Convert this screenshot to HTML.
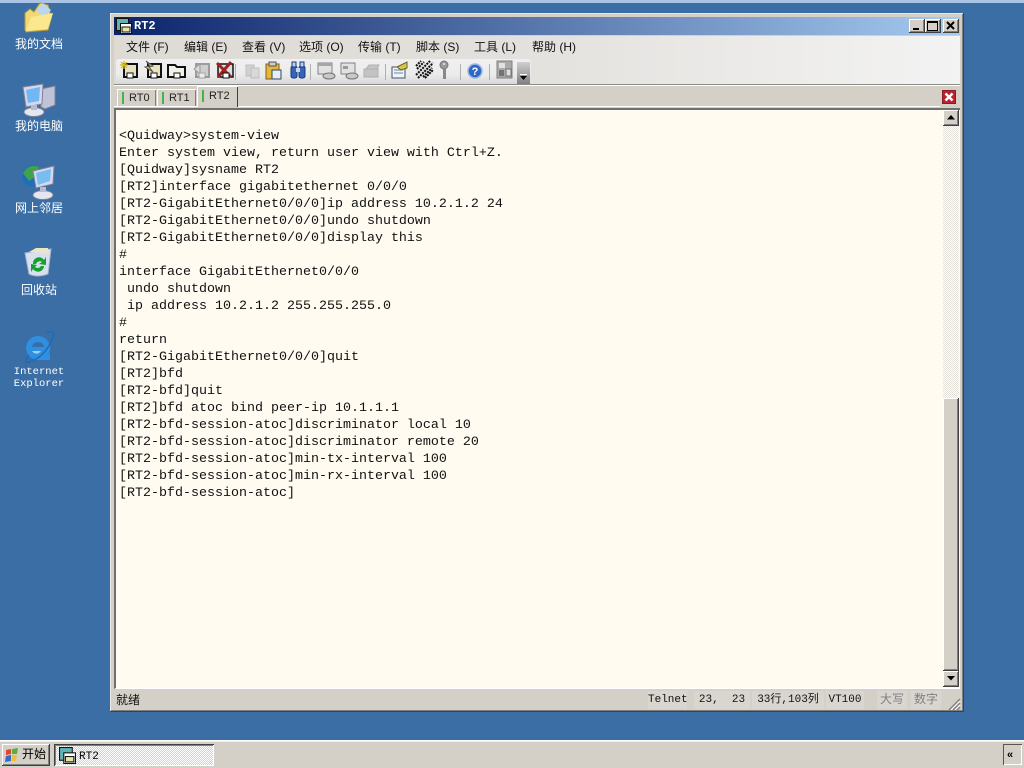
<!DOCTYPE html>
<html><head><meta charset="utf-8"><style>
html,body{margin:0;padding:0;width:1024px;height:768px;overflow:hidden;background:#3a6ea5}
*{box-sizing:border-box}
.a{position:absolute}
body{font-family:"Liberation Sans","Noto Sans CJK SC",sans-serif;font-size:12px;color:#000}
.t{position:absolute;white-space:pre;line-height:14px}
.dl{position:absolute;width:90px;left:-6px;text-align:center;color:#fff;font-size:12px;line-height:14px;font-family:"Liberation Sans","Noto Sans CJK SC",sans-serif}
.btn{position:absolute;background:#d4d0c8;box-shadow:inset -1px -1px 0 #404040,inset 1px 1px 0 #fff,inset -2px -2px 0 #808080}
#term{position:absolute;left:119px;top:128px;font:13.33px/17px "Liberation Mono","Noto Sans CJK SC",monospace;color:#111;white-space:pre;margin:0}
.m{position:absolute;top:40px;font-size:12px;line-height:14px;white-space:pre;color:#111;font-family:"Liberation Sans","Noto Sans CJK SC",sans-serif}
.sb{position:absolute;top:691px;height:18px;line-height:18px;font-size:11px;font-family:"Liberation Mono","Noto Sans CJK SC",monospace;background:#d9d6cf;white-space:pre;text-align:center;color:#111}
.tab{position:absolute;background:#d4d0c8;font-size:11px;color:#222;box-shadow:inset 1px 1px 0 #fff,inset -1px 0 0 #808080}
.g{position:absolute;width:2px;background:#3fb54a}
.sep{position:absolute;top:64px;width:1px;height:16px;background:#b0b0b0}
</style></head><body>
<div class="a" style="left:0;top:0;width:1024px;height:3px;background:#a9c4e4"></div>

<!-- desktop icons -->
<svg class="a" style="left:18px;top:0" width="40" height="34" viewBox="0 0 40 34"><path d="M7 13 L12 9 L16 12 L22 3 L30 5 L32 13 L34 15 L30 30 L8 32 L7 30Z" fill="#f2d774" stroke="#b89a3a"/><path d="M18 10 L25 3 L33 10 L26 18Z" fill="#bcd6ee"/><path d="M8 31 L13 17 L35 13 L30 29Z" fill="#fbe78e"/></svg>
<div class="dl" style="top:37px">我的文档</div>
<svg class="a" style="left:21px;top:83px" width="36" height="34" viewBox="0 0 36 34"><path d="M20 6 L34 3 L34 22 L24 26 L20 24Z" fill="#c0c3d8" stroke="#7f8298"/><path d="M2 4 L22 1 L21 21 L5 24Z" fill="#d5d8ec" stroke="#7f8298"/><path d="M5 7 L19 4 L18 18 L7 20Z" fill="#70b8f4"/><ellipse cx="13" cy="29" rx="10" ry="4.500" fill="#e6e6f0" stroke="#7f8298"/><rect x="10" y="22" width="6" height="5" fill="#b8bbd2"/></svg>
<div class="dl" style="top:119px">我的电脑</div>
<svg class="a" style="left:21px;top:164px" width="36" height="36" viewBox="0 0 36 36"><circle cx="12" cy="12" r="11" fill="#1f6fb8"/><path d="M2 9 Q8 -1 18 3 L16 11 L8 17Z" fill="#3fa34d"/><path d="M12 7 L33 2 L32 20 L15 24Z" fill="#d5d8ec" stroke="#7f8298"/><path d="M15 9 L30 5 L29 17 L17 21Z" fill="#78bcf4"/><ellipse cx="22" cy="31" rx="10" ry="4.500" fill="#e6e6f0" stroke="#7f8298"/><rect x="19" y="23" width="6" height="5" fill="#b8bbd2"/></svg>
<div class="dl" style="top:201px">网上邻居</div>
<svg class="a" style="left:22px;top:247px" width="34" height="32" viewBox="0 0 34 32"><path d="M3 6 L29 2 L26 27 Q15 31 7 27Z" fill="#d8e0ee" stroke="#a8b4cc"/><path d="M7 5 L14 1 L26 1 L27 6Z" fill="#ece6c8"/><path d="M11 17 A6 6 0 0 1 22 13 L24 10 L24 18 L17 17 L20 15 A4 4 0 0 0 14 17Z" fill="#14a02c"/><path d="M22 19 A6 6 0 0 1 11 22 L9 25 L9 17 L15 18 L13 20 A4 4 0 0 0 19 19Z" fill="#14a02c"/></svg>
<div class="dl" style="top:283px">回收站</div>
<svg class="a" style="left:22px;top:330px" width="34" height="34" viewBox="0 0 34 34"><ellipse cx="16" cy="18" rx="12" ry="12" fill="#2f8fe0"/><path d="M10 17 Q11 12 16 12 Q21 12 22 17Z" fill="#3a6ea5"/><rect x="9" y="17" width="19" height="4" fill="#2f8fe0"/><path d="M10 21 Q12 26 16 26 Q20 26 22 23 L28 23 L28 30 L14 30Z" fill="#2f8fe0"/><path d="M10 21 H19 Q16 25 12 23Z" fill="#9fd0f4"/><path d="M7 25 Q0 34 7 32 Q22 28 31 8 Q34 -1 24 3" fill="none" stroke="#1c6cbc" stroke-width="1.500"/></svg>
<div class="dl" style="top:366px;font:10.5px/12px 'Liberation Mono',monospace">Internet<br>Explorer</div>

<!-- window -->
<div class="a" style="left:110px;top:13px;width:854px;height:699px;background:#d4d0c8;box-shadow:inset -1px -1px 0 #404040,inset 1px 1px 0 #e8e8e8,inset -2px -2px 0 #808080"></div>
<div class="a" style="left:114px;top:17px;width:846px;height:18px;background:linear-gradient(90deg,#0a246a,#a6caf0)"></div>
<svg class="a" style="left:116px;top:18px" width="16" height="16" viewBox="0 0 16 16"><rect x=".5" y=".5" width="12" height="12" fill="#5fb3b3" stroke="#111"/><rect x="4.500" y="5.500" width="11" height="10" fill="#fff" stroke="#111"/><rect x="6" y="9" width="8" height="5" fill="#e8e6a0" stroke="#111"/></svg>
<div class="t" style="left:134px;top:19px;color:#fff;font:bold 12px/14px 'Liberation Mono',monospace">RT2</div>
<div class="btn" style="left:909px;top:19px;width:16px;height:14px"></div><div class="a" style="left:913px;top:28px;width:6px;height:2px;background:#000"></div>
<div class="btn" style="left:925px;top:19px;width:16px;height:14px"></div><div class="a" style="left:927px;top:21px;width:11px;height:10px;border:1px solid #000;border-top-width:2px"></div>
<div class="btn" style="left:943px;top:19px;width:16px;height:14px"></div>
<svg class="a" style="left:946px;top:21px" width="10" height="10"><path d="M1 1 L8 8 M8 1 L1 8" stroke="#000" stroke-width="2"/></svg>

<!-- menu + toolbar -->
<div class="a" style="left:114px;top:36px;width:846px;height:48px;background:linear-gradient(90deg,#dedbd5,#e2e0dc 45%,#f3f3f3)"></div>
<div class="a" style="left:116px;top:59px;width:415px;height:25px;background:linear-gradient(180deg,#f0f0f0,#ececec 60%,#d8d8d8);border-radius:3px"></div>
<div class="a" style="left:517px;top:62px;width:13px;height:22px;background:linear-gradient(180deg,#cfcfcf,#808080)"></div>
<div class="a" style="left:520px;top:74px;width:7px;height:1px;background:#fff"></div>
<svg class="a" style="left:520px;top:76px" width="7" height="4"><path d="M0 0H7L3.500 4Z" fill="#000"/></svg>
<div class="m" style="left:126px">文件 (F)</div><div class="m" style="left:184px">编辑 (E)</div><div class="m" style="left:242px">查看 (V)</div><div class="m" style="left:299px">选项 (O)</div><div class="m" style="left:358px">传输 (T)</div><div class="m" style="left:416px">脚本 (S)</div><div class="m" style="left:474px">工具 (L)</div><div class="m" style="left:532px">帮助 (H)</div>

<!-- toolbar icons -->
<svg class="a" style="left:119px;top:60px" width="420" height="22" viewBox="0 0 420 22" fill="none" stroke-width="1">
<g><path d="M5 4H18V17H5Z" fill="#e8e2c0" stroke="#111" stroke-width="2"/><path d="M1 5L9 5M5 1V9M2 2L8 8M8 2L2 8" stroke="#d0b820" stroke-width="1.200"/><rect x="8" y="13" width="6" height="5" fill="#fff" stroke="#111"/></g>
<g transform="translate(24)"><path d="M5 4H18V17H5Z" fill="#e8e2c0" stroke="#111" stroke-width="2"/><path d="M3 1L10 6L6 7L10 12L2 7L7 6Z" fill="#f0d820" stroke="#555"/><rect x="8" y="13" width="6" height="5" fill="#fff" stroke="#111"/></g>
<g transform="translate(48)"><path d="M1 5H8L10 7H18V17H1Z" fill="#f4f2e8" stroke="#111" stroke-width="2"/><rect x="7" y="13" width="6" height="5" fill="#fff" stroke="#111"/></g>
<g transform="translate(72)" opacity=".6"><path d="M5 4H18V17H5Z" fill="#bbb" stroke="#666" stroke-width="2"/><path d="M3 9L9 4V14Z" fill="#ccc" stroke="#666"/><rect x="8" y="13" width="6" height="5" fill="#eee" stroke="#777"/></g>
<g transform="translate(96)"><path d="M3 4H18V17H3Z" fill="#ddd" stroke="#111" stroke-width="1.500"/><path d="M2 3L16 17M16 2L3 17" stroke="#a02020" stroke-width="3"/><rect x="8" y="13" width="6" height="5" fill="#fff" stroke="#111"/></g>
<g transform="translate(126)" opacity=".55"><rect x="1" y="5" width="8" height="11" fill="#bbb" stroke="#999"/><rect x="6" y="8" width="8" height="10" fill="#ccc" stroke="#999"/></g>
<g transform="translate(146)"><rect x="1" y="4" width="13" height="15" fill="#e5b83a" stroke="#7a6020"/><rect x="4" y="2" width="7" height="4" fill="#ccc" stroke="#555"/><rect x="7" y="10" width="9" height="9" fill="#e8eef6" stroke="#345"/></g>
<g transform="translate(170)"><rect x="2" y="6" width="6" height="12" rx="2" fill="#3a64b8" stroke="#123a80"/><rect x="10" y="6" width="6" height="12" rx="2" fill="#3a64b8" stroke="#123a80"/><rect x="3" y="2" width="4" height="5" fill="#bcd0ee" stroke="#123a80"/><rect x="11" y="2" width="4" height="5" fill="#bcd0ee" stroke="#123a80"/><rect x="7" y="8" width="4" height="4" fill="#cad6ea"/></g>
<g transform="translate(198)" opacity=".7"><rect x="1" y="3" width="14" height="11" fill="#ddd" stroke="#555"/><rect x="1" y="3" width="14" height="3" fill="#888"/><ellipse cx="12" cy="16" rx="6" ry="3" fill="#bbb" stroke="#444"/></g>
<g transform="translate(221)" opacity=".7"><rect x="1" y="3" width="14" height="11" fill="#ddd" stroke="#555"/><rect x="3" y="6" width="5" height="3" fill="#777"/><ellipse cx="12" cy="16" rx="6" ry="3" fill="#bbb" stroke="#444"/></g>
<g transform="translate(244)" opacity=".6"><path d="M3 9H14L16 5H6ZM1 9H15V17H1Z" fill="#aaa" stroke="#888"/></g>
<g transform="translate(272)"><rect x="1" y="7" width="13" height="11" fill="#f0f4fa" stroke="#456"/><path d="M3 10H12M3 13H12" stroke="#68a"/><path d="M6 7L16 2V8L10 10Z" fill="#d8c84a" stroke="#6a6020"/></g>
<g transform="translate(296)"><rect x="1" y="1" width="17" height="17" fill="#e8e8e8"/><path d="M1 15L15 1M3 18L18 3M1 6L6 1M10 18L18 10M2 9L9 2M8 17L17 8" stroke="#111" stroke-width="2" stroke-dasharray="2 1"/></g>
<g transform="translate(320)"><circle cx="5" cy="5" r="4" fill="#999" stroke="#777"/><rect x="4" y="8" width="3" height="11" fill="#888"/><circle cx="5" cy="4" r="1" fill="#eee"/></g>
<g transform="translate(348)"><circle cx="8" cy="11" r="7" fill="#2d68c8" stroke="#9db8e0" stroke-width="1.500"/></g>
<text x="356" y="15" text-anchor="middle" font-family="Liberation Sans" font-weight="bold" font-size="11" fill="#fff">?</text>
<g transform="translate(377)" opacity=".8"><rect x="1" y="1" width="15" height="17" fill="#9a9a9a" stroke="#666"/><rect x="3" y="3" width="6" height="5" fill="#dedede"/><rect x="3" y="10" width="5" height="6" fill="#555"/><rect x="10" y="9" width="5" height="7" fill="#ddd" stroke="#555"/></g>
</svg>
<div class="sep" style="left:235px"></div><div class="sep" style="left:310px"></div><div class="sep" style="left:385px"></div><div class="sep" style="left:460px"></div><div class="sep" style="left:489px"></div>

<div class="a" style="left:114px;top:84px;width:846px;height:1px;background:#8a8a86"></div>
<div class="a" style="left:114px;top:85px;width:846px;height:1px;background:#fff"></div>

<!-- tabs -->
<div class="a" style="left:114px;top:106px;width:826px;height:1px;background:#fff"></div>
<div class="tab" style="left:117px;top:89px;width:39px;height:17px"></div><div class="g" style="left:122px;top:92px;height:12px"></div><div class="t" style="left:129px;top:91px;font-size:11px;color:#222">RT0</div>
<div class="tab" style="left:157px;top:89px;width:39px;height:17px"></div><div class="g" style="left:162px;top:92px;height:12px"></div><div class="t" style="left:169px;top:91px;font-size:11px;color:#222">RT1</div>
<div class="tab" style="left:197px;top:86px;width:41px;height:21px;box-shadow:inset 1px 1px 0 #fff,inset -1px 0 0 #404040"></div><div class="g" style="left:202px;top:90px;height:12px"></div><div class="t" style="left:209px;top:89px;font-size:11px;color:#222">RT2</div>
<div class="a" style="left:942px;top:90px;width:14px;height:14px;background:#b92231;border:1px solid #8a1a24"></div>
<svg class="a" style="left:944px;top:92px" width="10" height="10"><path d="M1.500 1.500L8.500 8.500M8.500 1.500L1.500 8.500" stroke="#fff" stroke-width="2.500"/></svg>

<!-- terminal -->
<div class="a" style="left:114px;top:108px;width:846px;height:581px;background:#fffbf0;border-top:2px solid #707070;border-left:2px solid #707070;border-bottom:1px solid #fff"></div>
<pre id="term">&lt;Quidway&gt;system-view
Enter system view, return user view with Ctrl+Z.
[Quidway]sysname RT2
[RT2]interface gigabitethernet 0/0/0
[RT2-GigabitEthernet0/0/0]ip address 10.2.1.2 24
[RT2-GigabitEthernet0/0/0]undo shutdown
[RT2-GigabitEthernet0/0/0]display this
#
interface GigabitEthernet0/0/0
 undo shutdown
 ip address 10.2.1.2 255.255.255.0
#
return
[RT2-GigabitEthernet0/0/0]quit
[RT2]bfd
[RT2-bfd]quit
[RT2]bfd atoc bind peer-ip 10.1.1.1
[RT2-bfd-session-atoc]discriminator local 10
[RT2-bfd-session-atoc]discriminator remote 20
[RT2-bfd-session-atoc]min-tx-interval 100
[RT2-bfd-session-atoc]min-rx-interval 100
[RT2-bfd-session-atoc]</pre>

<!-- scrollbar -->
<div class="a" style="left:943px;top:110px;width:16px;height:577px;background:repeating-conic-gradient(#e4e1da 0 25%,#fff 0 50%) 0 0/2px 2px"></div>
<div class="btn" style="left:943px;top:110px;width:16px;height:16px"></div>
<svg class="a" style="left:947px;top:115px" width="8" height="5"><path d="M4 0L8 4.500H0Z" fill="#000"/></svg>
<div class="btn" style="left:943px;top:398px;width:16px;height:273px"></div>
<div class="btn" style="left:943px;top:671px;width:16px;height:16px"></div>
<svg class="a" style="left:947px;top:676px" width="8" height="5"><path d="M0 0H8L4 4.500Z" fill="#000"/></svg>

<!-- status bar -->
<div class="t" style="left:116px;top:693px;font-size:12px;color:#111">就绪</div>
<div class="sb" style="left:648px;width:39px">Telnet</div>
<div class="sb" style="left:694px;width:56px">23,  23</div>
<div class="sb" style="left:752px;width:72px">33行,103列</div>
<div class="sb" style="left:826px;width:38px">VT100</div>
<div class="sb" style="left:877px;width:30px;color:#808080;font-size:12px">大写</div>
<div class="sb" style="left:911px;width:30px;color:#808080;font-size:12px">数字</div>
<svg class="a" style="left:948px;top:698px" width="13" height="12"><path d="M1 12L12 1M5 12L12 5M9 12L12 9" stroke="#808080" stroke-width="1.500"/><path d="M3 12L12 3M7 12L12 7" stroke="#fff"/></svg>

<!-- taskbar -->
<div class="a" style="left:0;top:740px;width:1024px;height:28px;background:#d4d0c8;border-top:1px solid #fff"></div>
<div class="a" style="left:0;top:741px;width:1024px;height:1px;background:#f0eee8"></div>
<div class="btn" style="left:2px;top:744px;width:48px;height:22px"></div>
<svg class="a" style="left:4px;top:747px" width="16" height="16"><path d="M2 3L7 2V7L2 8Z" fill="#e04828"/><path d="M8 2L14 1L13 7L8 7Z" fill="#58b040"/><path d="M2 9L7 8V14L1 15Z" fill="#3868c8"/><path d="M8 8H13L12 14L8 14Z" fill="#f0c030"/></svg>
<div class="t" style="left:22px;top:747px;font-size:12px;color:#000">开始</div>
<div class="a" style="left:54px;top:744px;width:160px;height:22px;background:repeating-conic-gradient(#d4d0c8 0 25%,#fff 0 50%) 0 0/2px 2px;box-shadow:inset 1px 1px 0 #404040,inset -1px -1px 0 #fff,inset 2px 2px 0 #808080"></div>
<svg class="a" style="left:59px;top:747px" width="17" height="17" viewBox="0 0 16 16"><rect x=".5" y=".5" width="12" height="12" fill="#5fb3b3" stroke="#111"/><rect x="4.500" y="5.500" width="11" height="10" fill="#fff" stroke="#111"/><rect x="6" y="9" width="8" height="5" fill="#e8e6a0" stroke="#111"/></svg>
<div class="t" style="left:79px;top:750px;font:11px/14px 'Liberation Mono',monospace;color:#000">RT2</div>
<div class="a" style="left:1003px;top:744px;width:19px;height:21px;box-shadow:inset 1px 1px 0 #555,inset -1px -1px 0 #fff"></div>
<div class="t" style="left:1007px;top:748px;font:bold 11px/14px 'Liberation Sans',sans-serif;color:#000">«</div>
</body></html>
